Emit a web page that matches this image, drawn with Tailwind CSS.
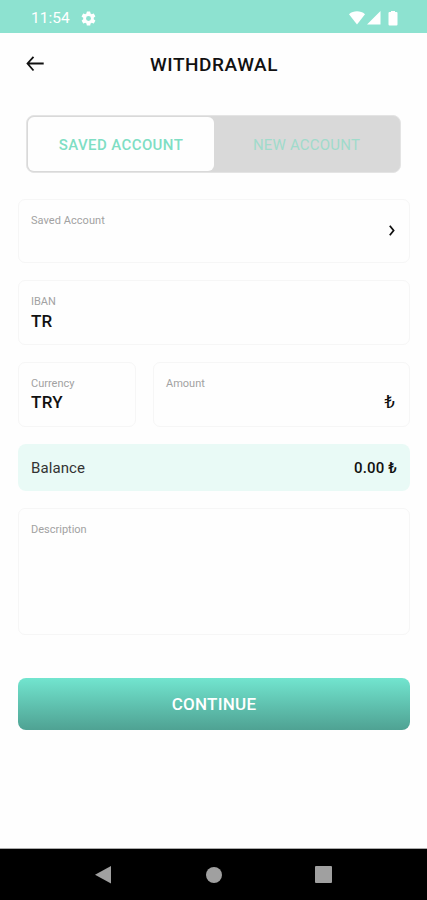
<!DOCTYPE html>
<html lang="en">
<head>
<meta charset="utf-8">
<title>Withdrawal</title>
<script src="https://cdn.jsdelivr.net/npm/@tailwindcss/browser@4"></script>
</head>
<body class="flex h-[900px] w-[427px] flex-col overflow-hidden bg-[#fefefe] font-[Roboto,'Liberation_Sans',sans-serif] text-[#111]">
  <div class="flex h-[33px] shrink-0 items-center bg-[#8de2d0] pt-[3px] pl-[31px] pr-[29px] text-white">
    <span class="text-[15.5px] leading-5">11:54</span>
    <svg class="ml-[10px] size-[17px]" viewBox="0 0 24 24" fill="currentColor"><path d="M19.4 13a7.800 7.800 0 0 0 0-2l2.100-1.650a.5.5 0 0 0 .12-.64l-2-3.460a.5.5 0 0 0-.61-.22l-2.490 1a7.300 7.300 0 0 0-1.690-.98l-.38-2.650A.49.49 0 0 0 14 2h-4a.49.49 0 0 0-.49.42l-.38 2.650c-.61.25-1.170.58-1.690.98l-2.490-1a.5.5 0 0 0-.61.22l-2 3.460a.5.5 0 0 0 .12.64L4.600 11a7.800 7.800 0 0 0 0 2l-2.110 1.650a.5.5 0 0 0-.12.64l2 3.460c.12.220.390.300.610.220l2.490-1c.520.400 1.080.730 1.690.980l.38 2.650c.03.240.240.420.490.420h4c.250 0 .460-.180.490-.420l.38-2.650a7.300 7.300 0 0 0 1.690-.980l2.490 1c.230.090.490 0 .610-.220l2-3.460a.5.5 0 0 0-.12-.64zM12 15.500a3.500 3.500 0 1 1 0-7 3.500 3.500 0 0 1 0 7z"/></svg>
    <div class="ml-auto flex items-center">
      <svg class="h-[14px] w-[16px]" viewBox="0 0 16 14" fill="currentColor"><path d="M0 3.200C4.500-.6 11.500-.6 16 3.200L8 13.500z"/></svg>
      <svg class="ml-[2px] h-[14px] w-[14px]" viewBox="0 0 14 14" fill="currentColor"><path d="M13.500 0v13.500H0z"/></svg>
      <svg class="ml-[7px] h-[15px] w-[10px]" viewBox="0 0 10 15" fill="currentColor"><path d="M3 0h4v1h1.500q1 0 1 1v11.500q0 1-1 1h-7q-1 0-1-1v-11.500q0-1 1-1H3z"/></svg>
    </div>
  </div>
  <header class="grid h-[62px] shrink-0 grid-cols-[1fr_auto_1fr] items-center px-[26px]">
    <svg class="h-[16px] w-[18px]" viewBox="0 0 18 16" fill="none" stroke="#111" stroke-width="1.800"><path d="M17.700 7.500H1.700M7.500 .8L1.500 7.500L7.500 14.500"/></svg>
    <h1 class="pt-[2px] pl-[1px] text-[19px] leading-6 font-medium tracking-[0.55px]">WITHDRAWAL</h1>
  </header>
  <div class="mr-[26px] ml-[26px] mt-[20px] flex h-[58px] shrink-0 rounded-[8px] border border-[#e4e4e4] bg-[#d9d9d9] p-[1px] text-[15px] font-medium text-[#7fdec4]">
    <div class="flex w-[186px] items-center justify-center rounded-[6px] bg-[#fefefe] pt-[2px] tracking-[0.4px]">SAVED ACCOUNT</div>
    <div class="flex flex-1 items-center justify-center pt-[2px] font-normal tracking-[0.2px] text-[#a0dbcb]">NEW ACCOUNT</div>
  </div>
  <main class="flex flex-col pt-[26px] pr-[17px] pl-[18px] text-[17px]">
    <section class="flex h-[64px] justify-between rounded-[7px] border border-[#f6f6f6] px-[12px] pt-[13px]">
      <span class="text-[11px] leading-[15px] tracking-[0.050px] text-[#a2a2a2]">Saved Account</span>
      <svg class="mt-[12px] mr-[2px] h-[11px] w-[6px]" viewBox="0 0 6 11" fill="none" stroke="#111" stroke-width="1.800"><path d="M.8 .8l3.800 4.700L.8 10.200"/></svg>
    </section>
    <section class="mt-[17px] flex h-[65px] flex-col rounded-[7px] border border-[#f6f6f6] px-[12px] pt-[14px]">
      <span class="text-[11px] leading-[14px] text-[#a2a2a2]">IBAN</span>
      <span class="mt-[2px] leading-5 font-medium tracking-[0.2px]">TR</span>
    </section>
    <div class="mt-[17px] flex h-[65px] gap-[17px]">
      <section class="flex w-[118px] flex-col rounded-[7px] border border-[#f6f6f6] px-[12px] pt-[14px]">
        <span class="text-[11px] leading-[14px] text-[#a2a2a2]">Currency</span>
        <span class="mt-[1px] leading-5 font-medium tracking-[0.3px]">TRY</span>
      </section>
      <section class="flex flex-1 flex-col rounded-[7px] border border-[#f6f6f6] px-[12px] pt-[14px]">
        <span class="text-[11px] leading-[14px] text-[#a2a2a2]">Amount</span>
        <span class="mt-[1px] self-end pr-[2px] text-[19px] leading-5">₺</span>
      </section>
    </div>
    <section class="mt-[17px] flex h-[47px] items-center justify-between rounded-[8px] bg-[#e9faf6] px-[13px] pt-[1px]">
      <span class="text-[15px] tracking-[0.1px] text-[#333]">Balance</span>
      <span class="text-[15px] font-medium tracking-[0.150px]">0.00 ₺</span>
    </section>
    <section class="mt-[17px] h-[127px] rounded-[7px] border border-[#f6f6f6] px-[12px] pt-[14px]">
      <div class="text-[11px] leading-[14px] text-[#a2a2a2]">Description</div>
    </section>
    <button class="mt-[43px] h-[52px] rounded-[8px] bg-linear-to-b from-[#72e5cf] to-[#4fa293] pt-[1px] text-[17px] font-medium tracking-[0.250px] text-white">CONTINUE</button>
  </main>
  <nav class="mt-auto grid h-[52px] shrink-0 grid-cols-[110px_110px_110px] items-center justify-center justify-items-center border-t border-[#aaa] bg-black text-[#a0a0a0]">
    <svg class="mr-[2px] h-[20px] w-[18px]" viewBox="0 0 18 20" fill="currentColor"><path d="M17 1v17.500L1 9.700z"/></svg>
    <span class="size-[16px] rounded-full bg-[#a0a0a0]"></span>
    <span class="size-[17px] rounded-[1px] bg-[#a0a0a0]"></span>
  </nav>
</body>
</html>
